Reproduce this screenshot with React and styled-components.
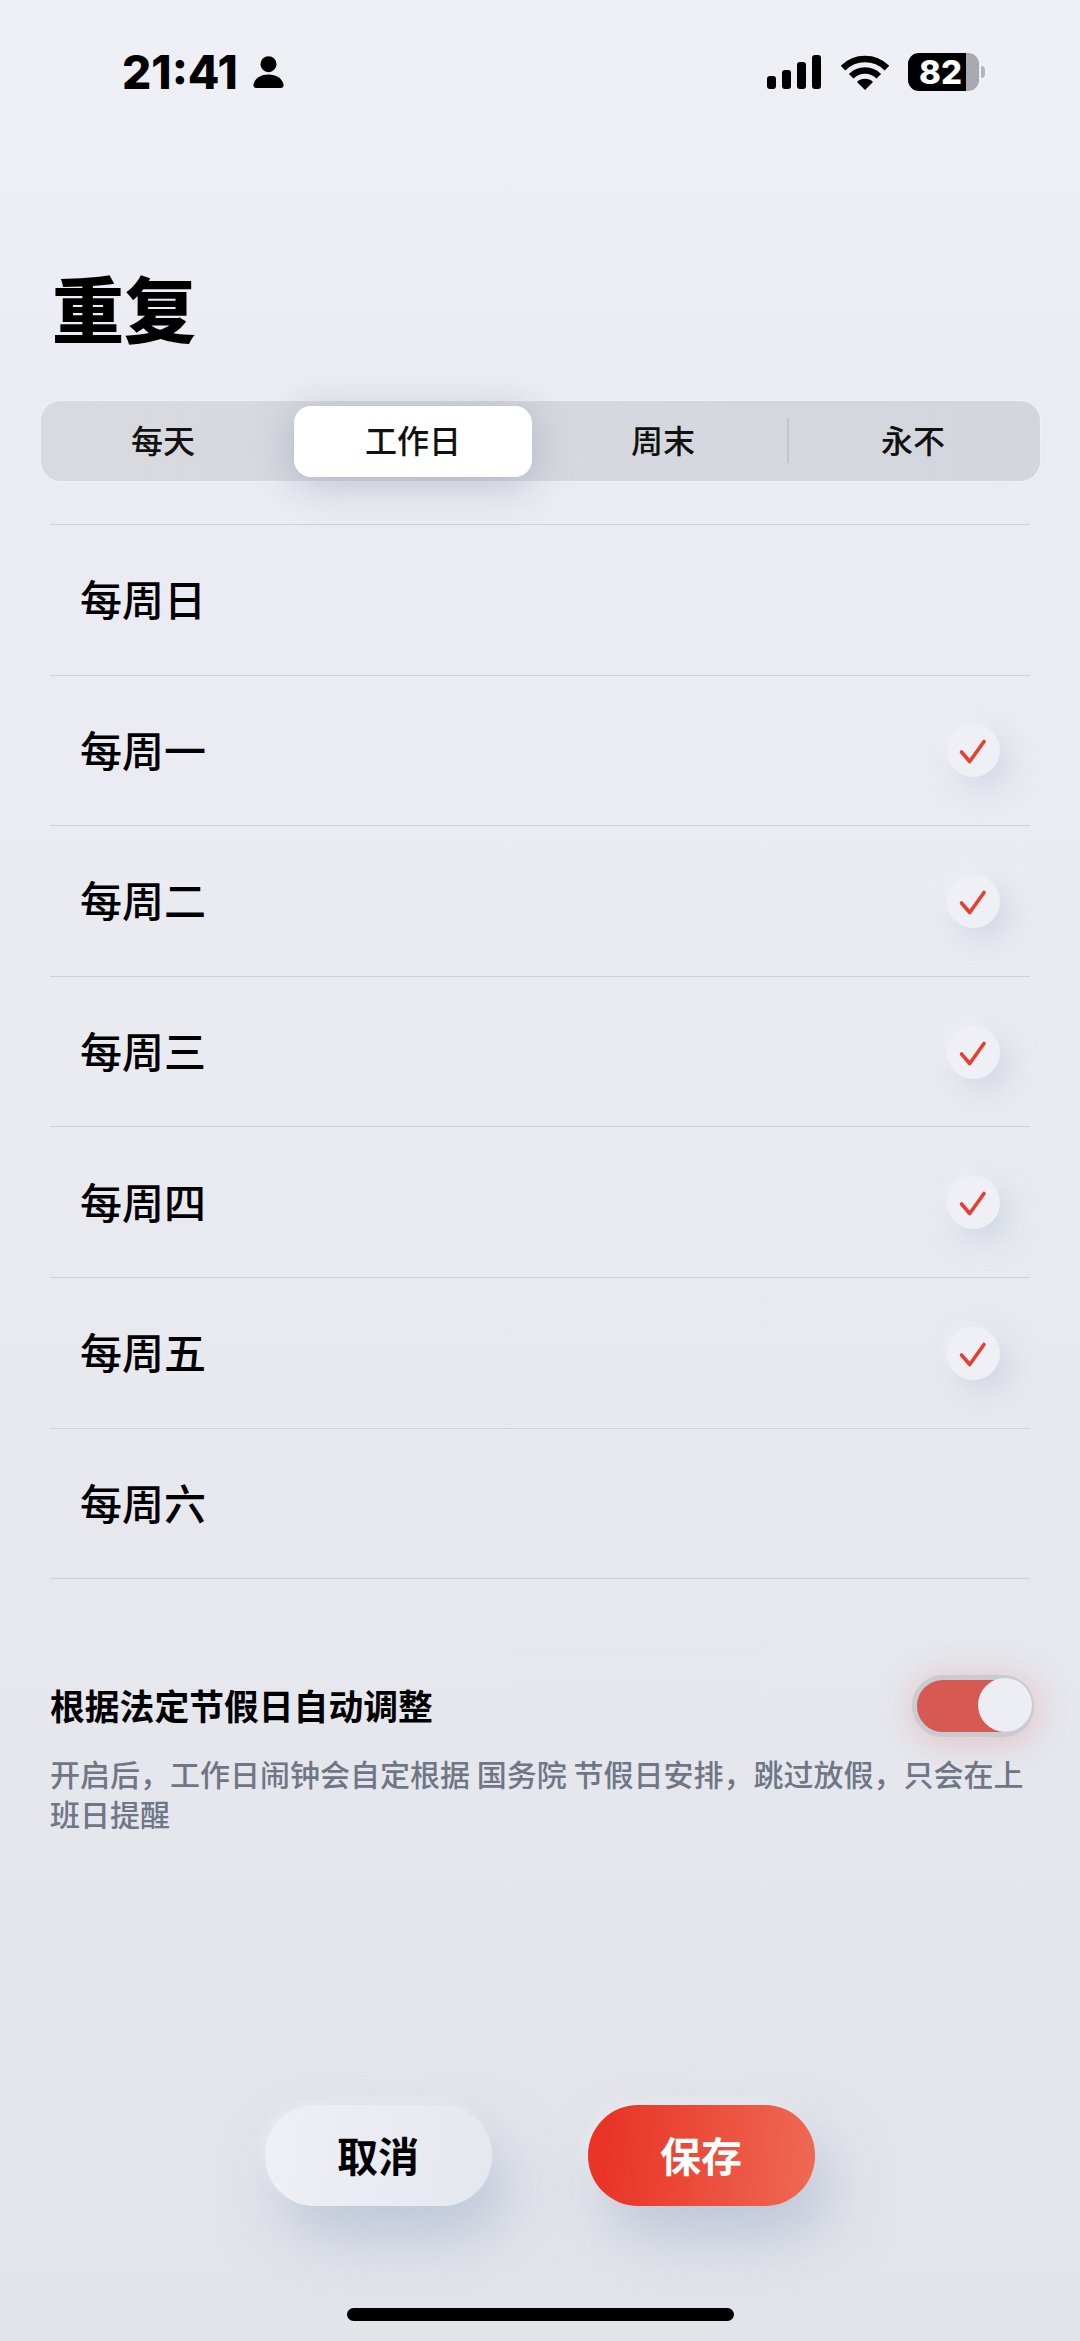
import React from "react";
import styled, { createGlobalStyle } from "styled-components";

const cjk = `"Noto Sans CJK SC", "Noto Sans", sans-serif`;

const Global = createGlobalStyle`
  html, body { margin: 0; padding: 0; }
  body { font-family: ${cjk}; color: #000; }
  * { box-sizing: border-box; }
`;

const Page = styled.div`
  width: 1080px;
  height: 2341px;
  overflow: hidden;
  display: flex;
  flex-direction: column;
  background: linear-gradient(180deg, #eff0f6 0%, #ebecf3 20%, #e9ebf1 45%, #e5e7ed 75%, #e2e4ea 100%);
`;

const StatusBar = styled.div`
  display: flex;
  justify-content: space-between;
  align-items: center;
  height: 91px;
  padding: 53px 101px 0 122px;
`;

const StatusGroup = styled.div`
  display: flex;
  align-items: center;
  gap: ${(p) => p.$gap}px;
`;

const Clock = styled.span`
  font-family: Inter, "Liberation Sans", sans-serif;
  font-weight: 800;
  font-size: 46px;
  line-height: 38px;
`;

const Battery = styled.div`
  position: relative;
  width: 71px;
  height: 38px;
  border-radius: 11px;
  background: linear-gradient(90deg, #000 0 58px, #a9aaaf 58px 100%);
  color: #fff;
  font-family: Inter, "Liberation Sans", sans-serif;
  font-weight: 800;
  font-size: 33px;
  line-height: 38px;
  padding-left: 11px;

  &::after {
    content: "";
    position: absolute;
    left: 73px;
    top: 13px;
    width: 4px;
    height: 12px;
    border-radius: 0 4px 4px 0;
    background: #b4b5ba;
  }
`;

const Title = styled.h1`
  margin: 175px 0 3px;
  padding-left: 52px;
  font-size: 72px;
  line-height: 80px;
  font-weight: 900;
  color: #000;
`;

const Segment = styled.div`
  display: flex;
  gap: 12px;
  align-items: center;
  height: 80px;
  margin: 52px 40px 0 41px;
  padding-left: 3px;
  border-radius: 20px;
  background: linear-gradient(90deg, #d8dae0, #d4d6dd);
  box-shadow: 0 0 3px rgba(255, 255, 255, 0.6);
`;

const Tab = styled.div`
  position: relative;
  width: 238px;
  height: 71px;
  display: flex;
  align-items: center;
  justify-content: center;
  padding-bottom: 4px;
  font-size: 32px;
  font-weight: 500;
  color: #111;
  border-radius: 17px;
  background: ${(p) => (p.$active ? "#fff" : "transparent")};
  box-shadow: ${(p) => (p.$active ? "0 6px 42px rgba(125, 135, 165, 0.46)" : "none")};

  ${(p) =>
    p.$divided &&
    `&::before {
      content: "";
      position: absolute;
      left: -7px;
      top: 12px;
      width: 2px;
      height: 45px;
      background: #c3c5cc;
    }`}
`;

const List = styled.div`
  margin: 43px 50px 0;
  border-top: 1px solid #cfd2d9;
`;

const Row = styled.div`
  height: 150.6px;
  display: flex;
  align-items: center;
  justify-content: space-between;
  padding: 0 30px;
  border-bottom: 1px solid #cfd2d9;
  font-size: 42px;
  font-weight: 500;
  color: #000;
`;

const RowLabel = styled.span`
  margin-bottom: 4px;
`;

const Check = styled.div`
  width: 53px;
  height: 53px;
  border-radius: 50%;
  background: #eff0f5;
  box-shadow: 10px 12px 28px rgba(180, 190, 212, 0.42), -4px -4px 12px rgba(255, 255, 255, 0.3);
  display: flex;
  margin-top: 1px;
`;

const Holiday = styled.div`
  margin: 96px 46px 0 52px;
`;

const HolidayHead = styled.div`
  display: flex;
  align-items: center;
  justify-content: space-between;
  height: 62px;
`;

const HolidayTitle = styled.div`
  font-size: 34.8px;
  font-weight: 700;
  line-height: 62px;
  color: #000;
  margin-left: -2px;
  padding-bottom: 2px;
`;

const Toggle = styled.div`
  position: relative;
  width: 122px;
  height: 62px;
  border-radius: 31px;
  border: 5px solid #c9cad2;
  background: #d65a52;
  box-shadow: 2px 4px 34px rgba(225, 110, 105, 0.32);
`;

const Knob = styled.div`
  position: absolute;
  right: -3px;
  top: -2px;
  width: 54px;
  height: 54px;
  border-radius: 50%;
  background: #eceef3;
`;

const HolidayText = styled.p`
  margin: 16px 0 0 -2px;
  font-size: 30px;
  line-height: 40px;
  font-weight: 500;
  color: #6f7686;
`;

const Footer = styled.div`
  margin-top: auto;
  display: flex;
  justify-content: center;
  gap: 96px;
  padding-right: 1px;
`;

const Button = styled.div`
  width: 227px;
  height: 101px;
  border-radius: 50px;
  display: flex;
  align-items: center;
  justify-content: center;
  padding-bottom: 4px;
  font-size: 41px;
  font-weight: 700;
  color: ${(p) => (p.$primary ? "#fff" : "#000")};
  background: ${(p) =>
    p.$primary
      ? "linear-gradient(95deg, #e93426 8%, #ee6a55 100%)"
      : "linear-gradient(100deg, #eff0f6, #e5e7ef)"};
  box-shadow: 16px 32px 60px rgba(172, 184, 206, 0.68), -4px -4px 12px rgba(255, 255, 255, 0.3);
`;

const HomeBar = styled.div`
  align-self: center;
  width: 387px;
  height: 13px;
  border-radius: 7px;
  background: #000;
  margin: 102px 0 20px;
`;

const Person = () => (
  <svg width="31" height="32" viewBox="0 0 31 32">
    <circle cx="15.5" cy="8.2" r="8" fill="#000" />
    <path d="M3.5 32C.8 32 0 30 .6 28 2.2 22 8 18.5 15.5 18.5S28.8 22 30.4 28C31 30 30.2 32 27.5 32Z" fill="#000" />
  </svg>
);

const Signal = () => (
  <svg width="55" height="34" viewBox="0 0 55 34">
    <rect x="0" y="21" width="9" height="13" rx="3" fill="#000" />
    <rect x="15" y="15" width="9" height="19" rx="3" fill="#000" />
    <rect x="30" y="7" width="9" height="27" rx="3" fill="#000" />
    <rect x="45" y="0" width="9" height="34" rx="3" fill="#000" />
  </svg>
);

const Wifi = () => (
  <svg width="48" height="35" viewBox="0 0 48 35" fill="none">
    <path d="M2.1 13.1A31 31 0 0 1 45.9 13.1" stroke="#000" strokeWidth="6.5" />
    <path d="M10.2 21.2A19.5 19.5 0 0 1 37.8 21.2" stroke="#000" strokeWidth="6.5" />
    <path d="M24 35L16 27A11.3 11.3 0 0 1 32 27Z" fill="#000" />
  </svg>
);

const CheckMark = () => (
  <svg width="53" height="53" viewBox="0 0 53 53" fill="none">
    <path d="M14.5 28L22.7 37.5L37 17.5" stroke="#e5402f" strokeWidth="3.6" strokeLinecap="round" strokeLinejoin="round" />
  </svg>
);

const tabs = ["每天", "工作日", "周末", "永不"];
const days = [
  ["每周日", false],
  ["每周一", true],
  ["每周二", true],
  ["每周三", true],
  ["每周四", true],
  ["每周五", true],
  ["每周六", false],
];

export default function App() {
  return (
    <Page>
      <Global />
      <StatusBar>
        <StatusGroup $gap={15}>
          <Clock>21:41</Clock>
          <Person />
        </StatusGroup>
        <StatusGroup $gap={19}>
          <Signal />
          <Wifi />
          <Battery>82</Battery>
        </StatusGroup>
      </StatusBar>
      <Title>重复</Title>
      <Segment>
        {tabs.map((t, i) => (
          <Tab key={t} $active={i === 1} $divided={i === 3}>
            {t}
          </Tab>
        ))}
      </Segment>
      <List>
        {days.map(([d, on]) => (
          <Row key={d}>
            <RowLabel>{d}</RowLabel>
            {on && (
              <Check>
                <CheckMark />
              </Check>
            )}
          </Row>
        ))}
      </List>
      <Holiday>
        <HolidayHead>
          <HolidayTitle>根据法定节假日自动调整</HolidayTitle>
          <Toggle>
            <Knob />
          </Toggle>
        </HolidayHead>
        <HolidayText>开启后，工作日闹钟会自定根据 国务院 节假日安排，跳过放假，只会在上班日提醒</HolidayText>
      </Holiday>
      <Footer>
        <Button>取消</Button>
        <Button $primary>保存</Button>
      </Footer>
      <HomeBar />
    </Page>
  );
}
